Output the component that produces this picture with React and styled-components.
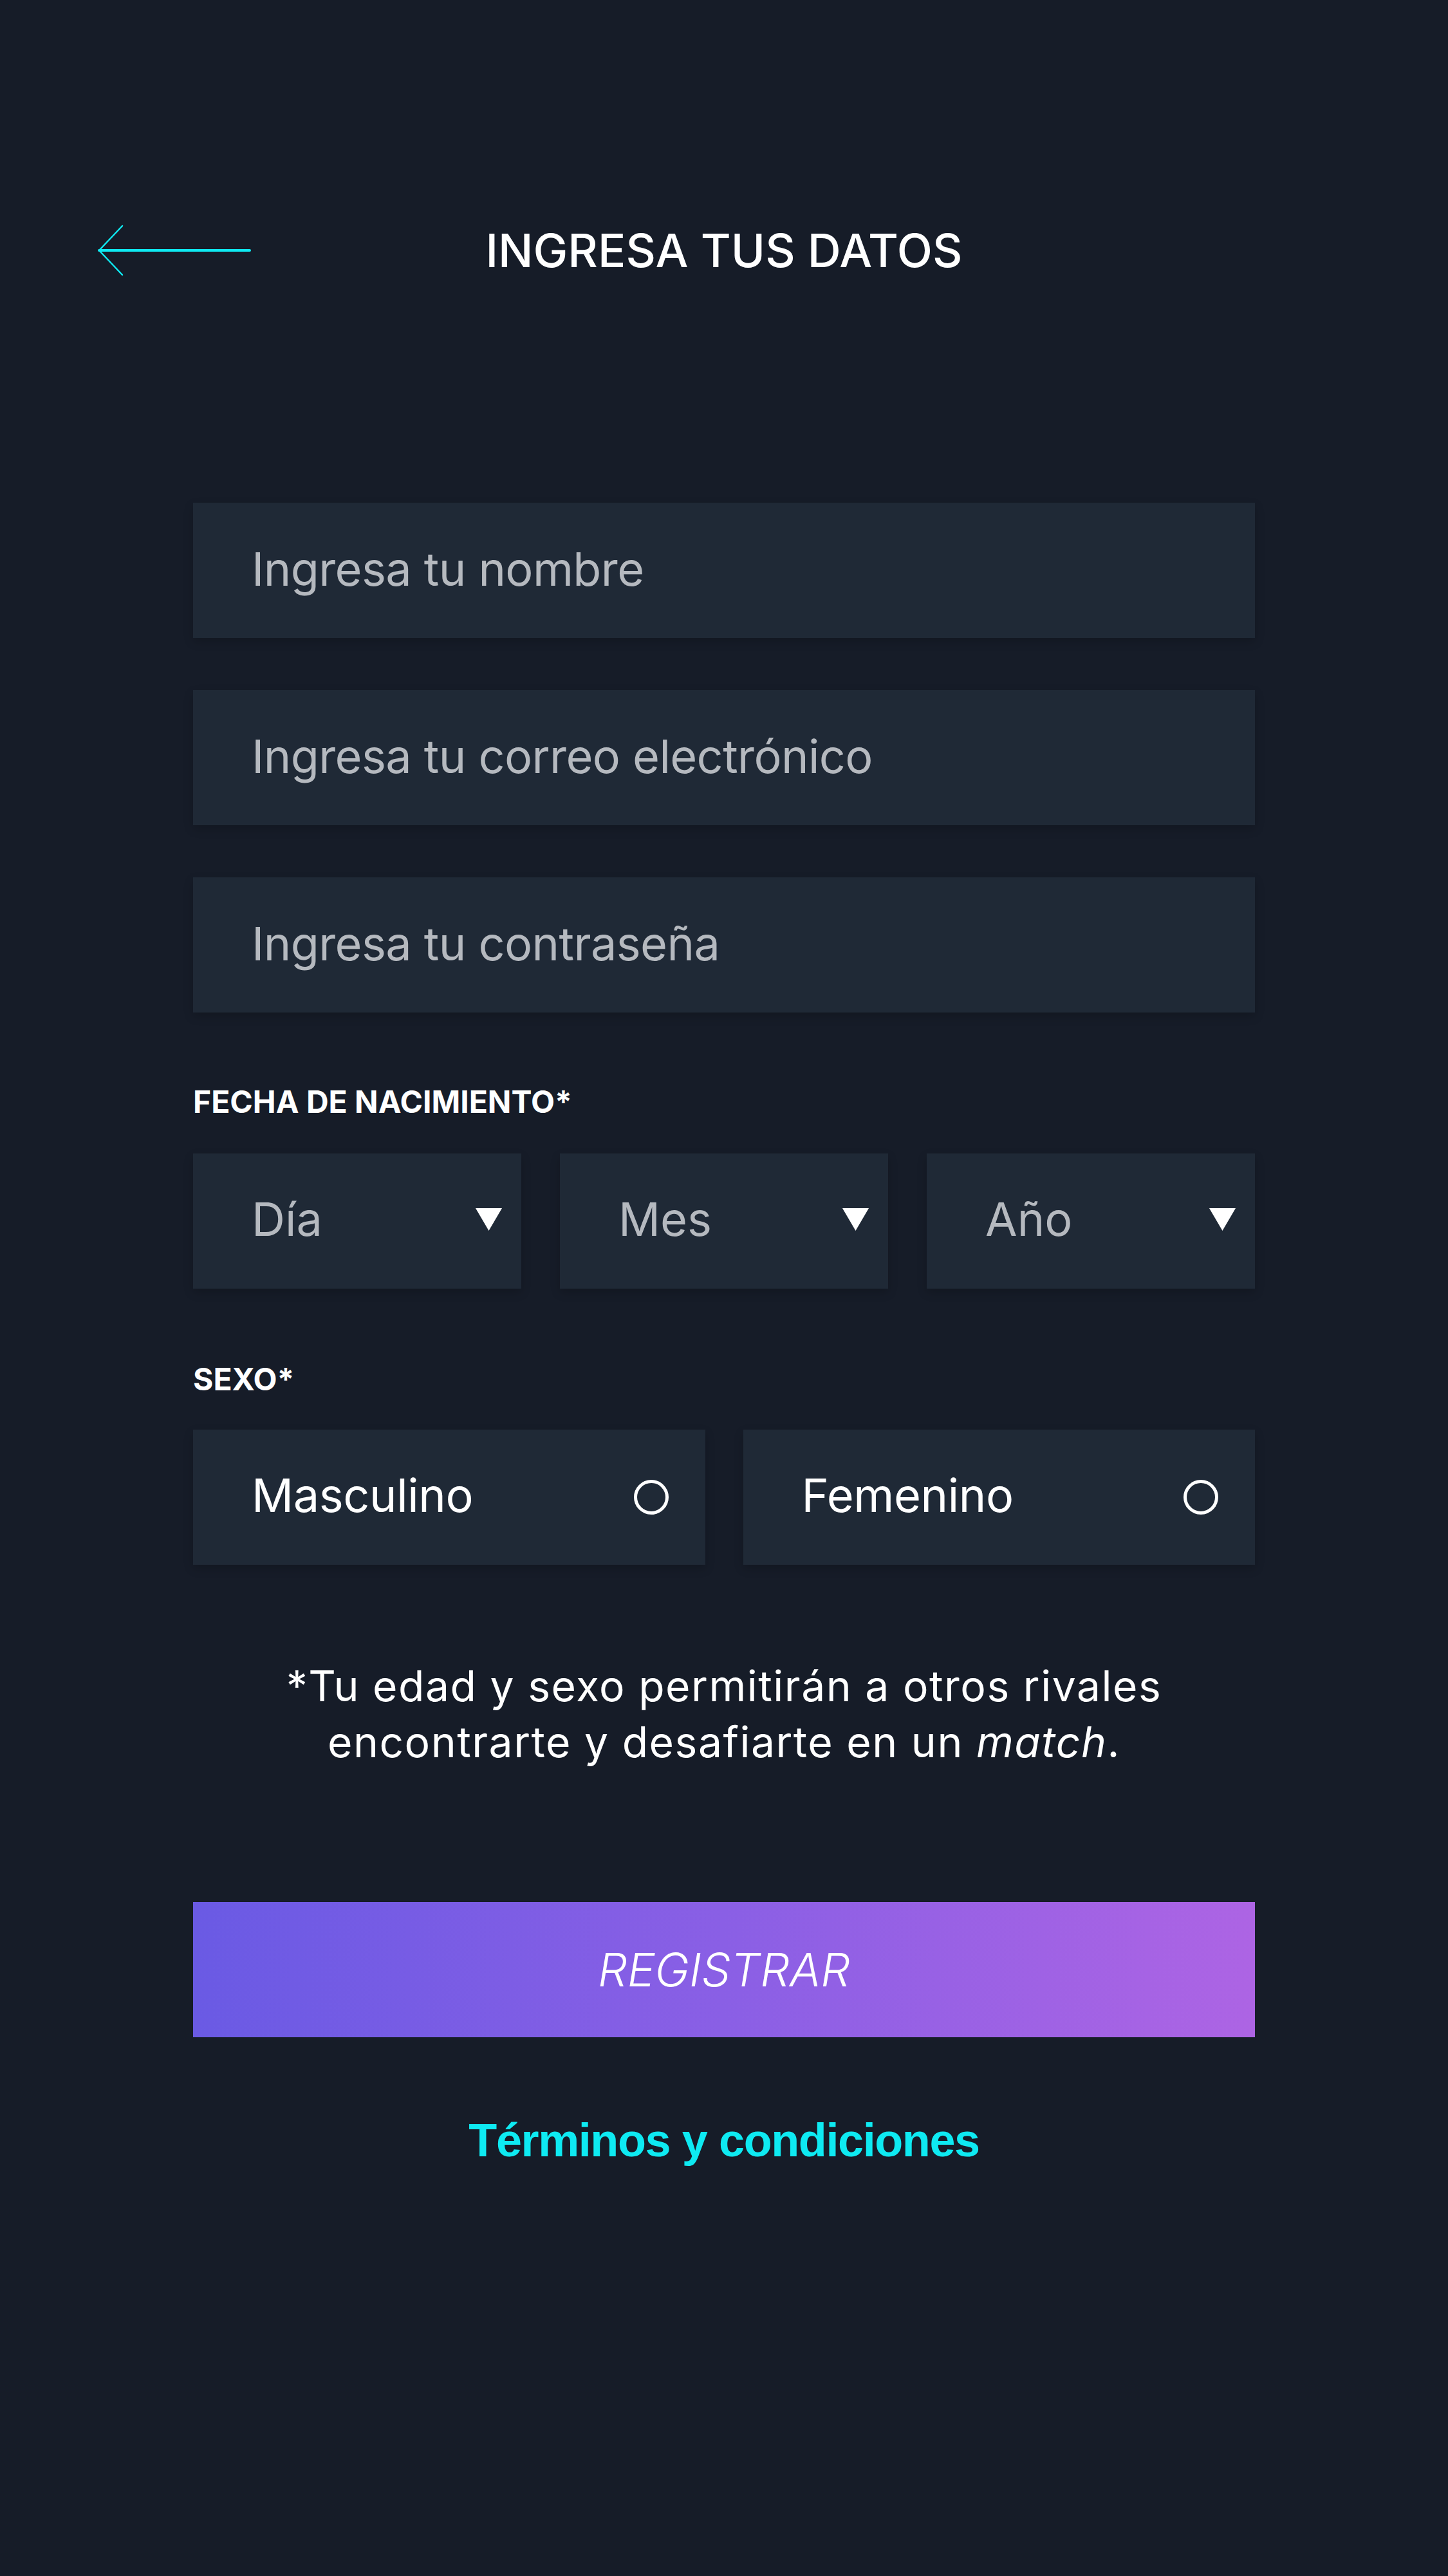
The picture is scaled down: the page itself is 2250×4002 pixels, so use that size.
import React from 'react';
import styled, { createGlobalStyle } from 'styled-components';

const Global = createGlobalStyle`
  html, body { margin: 0; padding: 0; background: #161c28; }
  body { font-family: Inter, "Noto Sans", sans-serif; }
  * { box-sizing: border-box; }
`;

const Page = styled.div`
  min-height: 4002px;
  background: #161c28;
  display: flex;
  flex-direction: column;
  padding-top: 339px;
`;

const Header = styled.header`
  display: grid;
  grid-template-columns: 1fr auto 1fr;
  align-items: center;
  height: 100px;
`;

const Back = styled.button`
  justify-self: start;
  display: flex;
  background: none;
  border: 0;
  padding: 0 0 0 151px;
  cursor: pointer;
`;

const Title = styled.h1`
  margin: 0;
  font: 500 72px/1 Inter, sans-serif;
  color: #ffffff;
  white-space: nowrap;
`;

const Form = styled.form`
  width: 1650px;
  margin: 342px auto 0;
  display: flex;
  flex-direction: column;
`;

const Fields = styled.div`
  display: flex;
  flex-direction: column;
  gap: 81px;
`;

const boxShadow = '0 6px 14px rgba(0, 0, 0, 0.18)';

const TextInput = styled.input`
  display: block;
  width: 100%;
  height: 210px;
  border: 0;
  outline: none;
  background: #1f2936;
  box-shadow: ${boxShadow};
  padding: 0 40px 6px 91px;
  font: 400 72px Inter, sans-serif;
  letter-spacing: -0.6px;
  color: #ffffff;
  &::placeholder { color: #b5b9bf; opacity: 1; }
`;

const Label = styled.div`
  margin: ${p => p.$top}px 0 ${p => p.$bottom}px;
  font: 700 48px/1 Inter, sans-serif;
  color: #ffffff;
`;

const DateRow = styled.div`
  display: grid;
  grid-template-columns: repeat(3, 1fr);
  gap: 60px;
`;

const Select = styled.div`
  height: 210px;
  display: flex;
  align-items: center;
  justify-content: space-between;
  padding: 0 30px 6px 91px;
  background: #1f2936;
  box-shadow: ${boxShadow};
  font: 400 72px/1 Inter, sans-serif;
  color: #b5b9bf;
  cursor: pointer;
`;

const SexRow = styled.div`
  display: grid;
  grid-template-columns: 1fr 1fr;
  gap: 59px;
`;

const Option = styled.label`
  height: 210px;
  display: flex;
  align-items: center;
  justify-content: space-between;
  padding: 0 57px 6px 91px;
  background: #1f2936;
  box-shadow: ${boxShadow};
  font: 400 72px/1 Inter, sans-serif;
  letter-spacing: -0.4px;
  color: #ffffff;
  cursor: pointer;
`;

const Radio = styled.span`
  width: 54px;
  height: 54px;
  border-radius: 50%;
  border: 5px solid #ffffff;
  flex: none;
  margin-top: 6px;
`;

const Note = styled.p`
  margin: 145px 0 0;
  font: 400 66px/87px Inter, sans-serif;
  letter-spacing: 1.5px;
  color: #ffffff;
  text-align: center;
  em { font-style: italic; }
`;

const Submit = styled.button`
  margin-top: 205px;
  height: 210px;
  border: 0;
  background: linear-gradient(90deg, #6a5ae4 0%, #8a5fe5 50%, #ad64e4 100%);
  font: italic 300 72px/1 Inter, sans-serif;
  color: #ffffff;
  cursor: pointer;
`;

const Terms = styled.a`
  align-self: center;
  margin-top: 124px;
  font: 700 72px/1 "Liberation Sans", Arial, sans-serif;
  letter-spacing: -1.4px;
  color: #0eeaf2;
  text-decoration: none;
`;

const ArrowLeft = () => (
  <svg width="240" height="80" viewBox="0 0 240 80" fill="none">
    <line x1="3" y1="40" x2="237" y2="40" stroke="#0eeaf2" strokeWidth="4" strokeLinecap="round" />
    <polyline points="39,2 3,40 39,78" stroke="#0eeaf2" strokeWidth="2.5" strokeLinecap="round" strokeLinejoin="round" />
  </svg>
);

const Caret = () => (
  <svg width="41" height="35" viewBox="0 0 41 35">
    <polygon points="0,0 41,0 20.5,35" fill="#ffffff" />
  </svg>
);

export default function App() {
  return (
    <Page>
      <Global />
      <Header>
        <Back type="button" aria-label="Volver"><ArrowLeft /></Back>
        <Title>INGRESA TUS DATOS</Title>
        <div />
      </Header>
      <Form onSubmit={e => e.preventDefault()}>
        <Fields>
          <TextInput placeholder="Ingresa tu nombre" />
          <TextInput type="email" placeholder="Ingresa tu correo electrónico" />
          <TextInput type="password" placeholder="Ingresa tu contraseña" />
        </Fields>
        <Label $top={115} $bottom={56}>FECHA DE NACIMIENTO*</Label>
        <DateRow>
          {['Día', 'Mes', 'Año'].map(t => (
            <Select key={t}><span>{t}</span><Caret /></Select>
          ))}
        </DateRow>
        <Label $top={117} $bottom={54}>SEXO*</Label>
        <SexRow>
          <Option>Masculino<Radio /></Option>
          <Option>Femenino<Radio /></Option>
        </SexRow>
        <Note>
          *Tu edad y sexo permitirán a otros rivales<br />
          encontrarte y desafiarte en un <em>match</em>.
        </Note>
        <Submit type="submit">REGISTRAR</Submit>
        <Terms href="#">Términos y condiciones</Terms>
      </Form>
    </Page>
  );
}
